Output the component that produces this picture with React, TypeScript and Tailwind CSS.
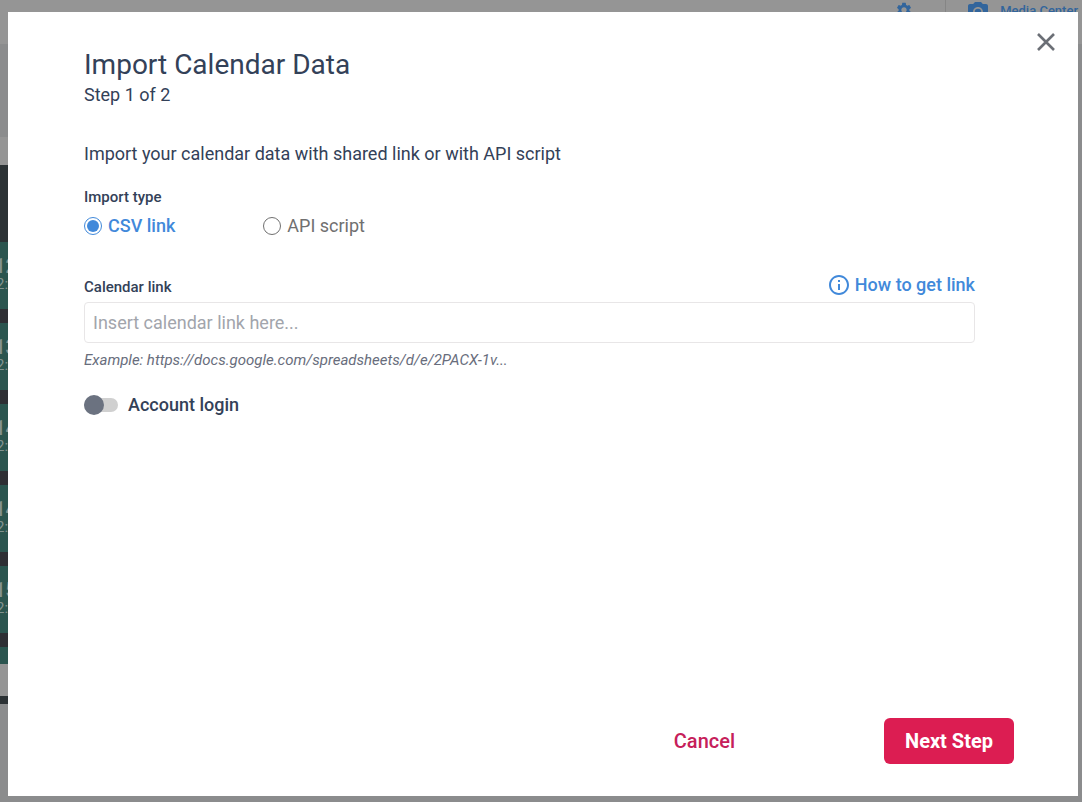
import { useState } from "react";
import { MdOutlineInfo, MdSettings, MdPhotoCamera } from "react-icons/md";

type ImportType = "csv" | "api";

const events = [
  { id: 1, title: "12", time: "2:00" },
  { id: 2, title: "13", time: "2:00" },
  { id: 3, title: "14", time: "2:00" },
  { id: 4, title: "14", time: "2:00" },
  { id: 5, title: "15", time: "2:00" },
];

const radioClass =
  "flex size-[18px] appearance-none items-center justify-center rounded-full border border-[#707070] checked:border-[#4189da] checked:before:size-3 checked:before:rounded-full checked:before:bg-[#4189da]";

function Backdrop() {
  return (
    <div aria-hidden="true" className="flex h-screen flex-col overflow-hidden bg-[#8b8c8d]">
      <div className="flex h-11 shrink-0 items-start justify-end bg-[#959595] pr-1 text-[#32659c]">
        <MdSettings className="mr-8 mt-px size-[18px]" />
        <div className="h-6 w-px bg-[#858585]" />
        <MdPhotoCamera className="ml-5 size-6" />
        <span className="ml-2.5 mt-[3px] text-[13px] font-medium leading-4">Media Center</span>
      </div>
      <div className="h-[93px] shrink-0" />
      <div className="h-7 w-1/2 shrink-0 bg-[#959595]" />
      <div className="w-1/2 shrink-0 bg-[#2c3235] pt-[77px] text-[#82938f]">
        <div className="flex flex-col gap-3.5 bg-[#2e2f34]">
          {events.map((e) => (
            <div key={e.id} className="-ml-2 h-[67px] overflow-hidden bg-[#2b554f] pt-3.5">
              <p className="pl-0.5 text-xl font-bold leading-5">{e.title}</p>
              <p className="pl-1 text-[15px] leading-4">{e.time}</p>
            </div>
          ))}
          <div className="h-[17px] bg-[#2b554f]" />
        </div>
        <div className="h-8 bg-[#959595]" />
        <div className="h-2" />
      </div>
    </div>
  );
}

export default function App() {
  const [importType, setImportType] = useState<ImportType>("csv");
  const [link, setLink] = useState("");
  const [login, setLogin] = useState(false);

  const radioLabel = (value: ImportType) =>
    importType === value ? "font-medium text-[#4189da]" : "text-[#707070]";

  return (
    <div className="font-[Roboto,sans-serif] text-[#334158]">
      <Backdrop />
      <div className="fixed inset-0 flex pb-1.5 pl-2 pr-1 pt-3">
        <div
          role="dialog"
          aria-modal="true"
          aria-labelledby="import-title"
          className="relative flex flex-1 flex-col bg-white pb-8 pl-19 pr-16 pt-[37px]"
        >
          <button type="button" aria-label="Close" className="absolute right-5.5 top-5 text-[#6b6f76]">
            <svg viewBox="0 0 20 20" className="size-5" fill="none" stroke="currentColor" strokeWidth="2.6">
              <path d="M2 2l16 16M18 2L2 18" />
            </svg>
          </button>

          <h1 id="import-title" className="text-[28px] leading-8">
            Import Calendar Data
          </h1>
          <p className="mt-0.5 text-lg leading-6">Step 1 of 2</p>
          <p className="mt-[35px] text-lg leading-6">
            Import your calendar data with shared link or with API script
          </p>

          <form className="mr-[39px] mt-[21px]">
            <fieldset>
              <legend className="text-[15px] font-medium leading-5">Import type</legend>
              <div className="mt-[7px] flex gap-22 text-lg leading-6">
                <label className={`flex items-center gap-1.5 ${radioLabel("csv")}`}>
                  <input
                    type="radio"
                    name="importType"
                    checked={importType === "csv"}
                    onChange={() => setImportType("csv")}
                    className={radioClass}
                  />
                  CSV link
                </label>
                <label className={`flex items-center gap-1.5 ${radioLabel("api")}`}>
                  <input
                    type="radio"
                    name="importType"
                    checked={importType === "api"}
                    onChange={() => setImportType("api")}
                    className={radioClass}
                  />
                  API script
                </label>
              </div>
            </fieldset>

            <div className="mt-[35px] flex items-center justify-between">
              <label htmlFor="calendar-link" className="pt-1 text-[15px] font-medium leading-5">
                Calendar link
              </label>
              <a href="#help" className="flex items-center gap-1 text-lg font-medium leading-6 text-[#4189da]">
                <MdOutlineInfo className="size-6" />
                How to get link
              </a>
            </div>
            <input
              id="calendar-link"
              type="text"
              value={link}
              onChange={(e) => setLink(e.target.value)}
              placeholder="Insert calendar link here..."
              className="mt-[5px] h-[41px] w-full rounded border border-[#e8e6e7] px-2 text-lg placeholder:text-[#a2a5ac]"
            />
            <p className="mt-[7px] text-[15px] italic leading-5 text-[#686d7c]">
              Example: https://docs.google.com/spreadsheets/d/e/2PACX-1v...
            </p>

            <label className="mt-[23px] flex w-fit items-center gap-2.5 text-lg font-medium leading-6">
              <input
                type="checkbox"
                role="switch"
                checked={login}
                onChange={(e) => setLogin(e.target.checked)}
                className="flex h-3.5 w-8.5 appearance-none items-center rounded-full bg-[#d0d0d0] before:size-5 before:shrink-0 before:rounded-full before:bg-[#6b7280] checked:justify-end checked:before:bg-[#4189da]"
              />
              Account login
            </label>
          </form>

          <div className="mt-auto flex items-center justify-end gap-32 text-xl">
            <button type="button" className="px-[21px] font-medium text-[#c6205a]">
              Cancel
            </button>
            <button type="button" className="h-[46px] rounded-md bg-[#dc1d52] px-[21px] font-bold text-white">
              Next Step
            </button>
          </div>
        </div>
      </div>
    </div>
  );
}
